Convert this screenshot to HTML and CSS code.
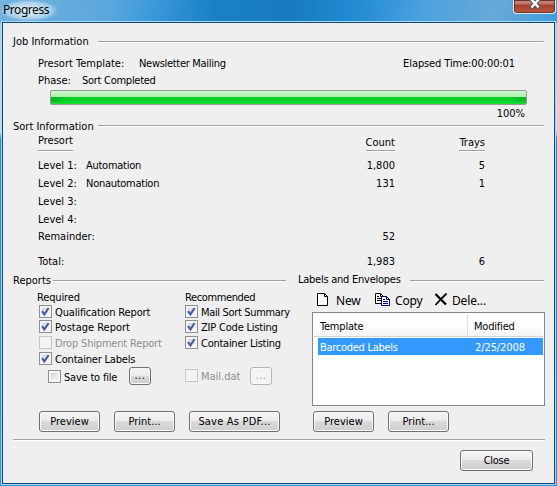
FILE: index.html
```html
<!DOCTYPE html>
<html lang="en">
<head>
<meta charset="utf-8">
<title>Progress</title>
<link rel="stylesheet" href="styles.css">
</head>
<body>
<svg width="0" height="0" class="defs"><defs>
  <symbol id="tick" viewBox="0 0 13 13"><path d="M3 6.2 5.4 9.4 9.6 3" fill="none" stroke="#415fa3" stroke-width="2.1"/></symbol>
</defs></svg>
<div class="window">
  <header class="titlebar">
    <h1>Progress</h1>
    <div class="x"><svg width="12" height="10" viewBox="0 0 12 10"><path d="M2-1 10 8M10-1 2 8" stroke="#555" stroke-width="4.6"/><path d="M2-1 9.6 7.5M10-1 2.4 7.5" stroke="#fff" stroke-width="2.4"/></svg></div>
  </header>
  <main class="client">
    <section class="job">
      <div class="legend"><h2 class="l-job">Job Information</h2><i></i></div>
      <div class="info"><span class="t-a">Presort Template:</span><span class="t-b">Newsletter Mailing</span><span class="elapsed">Elapsed Time:00:00:01</span></div>
      <div class="info phase"><span class="t-c">Phase:</span><span class="t-d">Sort Completed</span></div>
      <div class="bar"></div>
      <div class="pct">100%</div>
    </section>
    <section class="sort">
      <div class="legend"><h2 class="l-sort">Sort Information</h2><i></i></div>
      <div class="row head"><span><u>Presort</u></span><span></span><span class="n"><u>Count</u></span><span class="n"><u>Trays</u></span></div>
      <div class="row"><span>Level 1:</span><span class="auto">Automation</span><span class="n">1,800</span><span class="n">5</span></div>
      <div class="row"><span>Level 2:</span><span class="auto">Nonautomation</span><span class="n">131</span><span class="n">1</span></div>
      <div class="row"><span>Level 3:</span></div>
      <div class="row l4"><span>Level 4:</span></div>
      <div class="row rem"><span>Remainder:</span><span></span><span class="n">52</span></div>
      <div class="row"><span>Total:</span><span></span><span class="n">1,983</span><span class="n">6</span></div>
    </section>
    <div class="lower">
      <section class="reports">
        <div class="legend"><h2 class="l-rep">Reports</h2><i></i></div>
        <div class="cols">
          <div class="col">
            <h3 class="req">Required</h3>
            <label><b class="box"><svg><use href="#tick"/></svg></b><span class="q">Qualification Report</span></label>
            <label><b class="box"><svg><use href="#tick"/></svg></b><span class="p">Postage Report</span></label>
            <label class="off"><b class="box"></b><span class="d">Drop Shipment Report</span></label>
            <label><b class="box"><svg><use href="#tick"/></svg></b><span class="c">Container Labels</span></label>
            <div class="file"><label><b class="box"></b><span class="s">Save to file</span></label><button class="dots">...</button></div>
          </div>
          <div class="col second">
            <h3 class="rec">Recommended</h3>
            <label><b class="box"><svg><use href="#tick"/></svg></b><span class="m">Mail Sort Summary</span></label>
            <label><b class="box"><svg><use href="#tick"/></svg></b><span class="z">ZIP Code Listing</span></label>
            <label><b class="box"><svg><use href="#tick"/></svg></b><span class="cl">Container Listing</span></label>
            <div class="file mail"><label class="off"><b class="box"></b><span class="md">Mail.dat</span></label><button class="dots off">...</button></div>
          </div>
        </div>
        <div class="buttons"><button>Preview</button><button>Print...</button><button class="wide">Save As PDF...</button></div>
      </section>
      <section class="labels">
        <div class="legend"><h2 class="l-lab">Labels and Envelopes</h2><i></i></div>
        <div class="tools">
          <span class="tool new"><svg width="12" height="13" viewBox="0 0 12 13"><path d="M.5.5H7.5L10.5 3.5V12.5H.5Z" fill="#fff" stroke="#000"/><path d="M7.5.5V3.5H10.5" fill="none" stroke="#000"/></svg>New</span>
          <span class="tool copy"><svg width="16" height="14" viewBox="0 0 16 14"><path d="M.5.5H5.5L8.5 3.5V10.5H.5Z" fill="#fff" stroke="#000"/><path d="M5.5.5V3.5H8.5M2 3.5H4M2 5.5H6M2 7.5H6" fill="none" stroke="#000"/><path d="M6.5 3.5H11.5L14.5 6.5V12.5H6.5Z" fill="#fff" stroke="#000080"/><path d="M11.5 3.5V6.5H14.5M8 6.5H10M8 8.5H13M8 10.5H13" fill="none" stroke="#000080"/></svg>Copy</span>
          <span class="tool del"><svg width="14" height="13" viewBox="0 0 14 13"><path d="M1.5 1 12 11.5" stroke="#000" stroke-width="2.2"/><path d="M12.5.5 7 6 1.5 12" fill="none" stroke="#000" stroke-width="1.8"/></svg>Dele...</span>
        </div>
        <div class="list">
          <div class="lrow lhead"><span class="tp">Template</span><span class="mo">Modified</span></div>
          <div class="lrow sel"><span class="bl">Barcoded Labels</span><span class="dt">2/25/2008</span></div>
        </div>
        <div class="buttons"><button>Preview</button><button>Print...</button></div>
      </section>
    </div>
    <footer><button class="close">Close</button></footer>
  </main>
</div>
</body>
</html>
```
FILE: styles.css
```css
* { box-sizing: border-box; }
body { margin: 0; font: 11px/16px "DejaVu Sans Condensed", "DejaVu Sans", sans-serif; font-stretch: condensed; color: #000; }
h1, h2, h3 { margin: 0; font: inherit; }
.defs { display: block; }
.window { width: 557px; height: 486px; overflow: hidden; padding: 0 2px 2px;
  background: linear-gradient(100deg, #72b2de 0, #5aa7dd 110px, #3a98da 155px, #1b80c6 210px, #187bc0 290px, #218ad3 350px, #4da2dd 420px, #67a9d7 490px, #3c9cdc 557px) 0 0 / 100% 23px no-repeat,
  linear-gradient(#a5cce6 0, #c3e0f1 132px, #2689d4 139px, #2a91dc 100%); }
.titlebar { height: 22px; display: flex; justify-content: space-between; align-items: flex-start; }
h1 { font: 12px/20px "Noto Sans", sans-serif; letter-spacing: -.45px; margin-left: -2px; padding: 0 9px 1px 3px; background: radial-gradient(ellipse, rgba(255,255,255,.75) 15%, rgba(255,255,255,.4) 55%, transparent 72%); }
.x { width: 43px; height: 14px; margin-right: -1px; border: 1px solid #d8ecf7; border-top: 0; border-radius: 0 0 4px 4px; background: linear-gradient(#c98d84 0, #bd7468 4px, #a8402d 5px, #b95740 100%); box-shadow: inset 0 0 0 1px #73302a; display: flex; justify-content: center; }
.client { height: 462px; background: #efefef; border: 1px solid #12476c; box-shadow: 0 0 0 1px #a8dbf5; padding: 11px 10px 0; white-space: nowrap; }
.legend { display: flex; height: 14px; }
.legend h2 { flex: none; }
.legend i { flex: 1; height: 2px; margin-top: 7px; background: #a0a0a0; border-bottom: 1px solid #fff; }
.job { height: 85px; }
.l-job, .l-sort { width: 85px; }
.info { display: flex; height: 14px; margin: 8px 0 0 25px; }
.phase { margin-top: 3px; }
.t-a { width: 101px; }
.t-b { letter-spacing: -.3px; }
.t-c { width: 44px; }
.t-d, .auto { letter-spacing: -.27px; }
.elapsed { margin-left: auto; margin-right: 29px; letter-spacing: -.1px; }
.bar { margin: 3px 17px 0 37px; height: 15px; border: 1px solid #969b96; border-radius: 2px;
  background: linear-gradient(90deg, rgba(0,130,20,.35), transparent 16px calc(100% - 16px), rgba(0,130,20,.35)) 0 6px / 100% 5px no-repeat, linear-gradient(#d0f9d0 0, #a9efab 6px, #0acc26 6px, #09d329 10px, #1edc36 100%); }
.pct { text-align: right; height: 14px; margin: 1px 19px 0 0; }
.sort { height: 154px; }
.sort .legend i { margin-top: 6px; }
.row { display: grid; grid-template-columns: 48px 180px 129px 90px; margin: 0 0 4px 25px; height: 14px; }
.row .n { text-align: right; }
.row.head { margin: 1px 0 10px 25px; }
.head u { display: block; width: fit-content; text-decoration: none; line-height: 14px; height: 17px; border-bottom: 1px solid #a0a0a0; box-shadow: 0 1px #fff; }
.head .n u { margin-left: auto; line-height: 17px; }
.l4 { margin-bottom: 3px; }
.rem { margin-bottom: 11px; }
.lower { display: flex; height: 167px; border-bottom: 1px solid #a0a0a0; box-shadow: 0 1px #fff; margin-right: -1px; }
.reports { flex: none; width: 273px; margin-right: 12px; }
.labels { flex: 1; }
.labels .legend { margin-right: 1px; }
.l-rep { width: 40px; }
.l-lab { width: 112px; margin-top: -1px; letter-spacing: -.25px; }
.cols { display: flex; height: 124px; padding: 3px 0 0 26px; }
.col { flex: none; width: 146px; }
.second { width: 101px; }
.col label { display: flex; height: 14px; margin-bottom: 2px; gap: 3px; }
.col h3 { height: 15px; margin-left: -2px; }
.second h3 { margin-left: 0; letter-spacing: -.38px; }
.req { letter-spacing: -.15px; }
.q { letter-spacing: -.15px; }
.d { letter-spacing: -.18px; }
.c, .s, .z { letter-spacing: -.2px; }
.m { letter-spacing: -.34px; }
.cl { letter-spacing: -.26px; }
.col label:first-of-type { margin-bottom: 1px; }
.box { flex: none; width: 13px; height: 13px; border: 1px solid #8e8f8f; background: linear-gradient(135deg, #cfd3d9, #f7f7f7) 2px 2px / 7px 7px no-repeat #f4f4f4; display: block; }
.box svg { width: 13px; height: 13px; display: block; margin: -1px; }
.off { color: #8e908c; }
.off .box { border-color: #c4c4c4; background: #f4f4f4; }
.file { display: flex; padding-left: 9px; align-items: flex-start; }
.file label { width: 81px; margin-top: 2px; }
.mail { padding-left: 0; margin-top: 19px; }
.mail label { width: 65px; margin-top: 0; }
button { font: inherit; color: #000; width: 61px; height: 21px; padding: 1px 0 0; line-height: 18px; border: 1px solid #707070; border-radius: 3px; background: linear-gradient(#f5f5f5, #ebebeb 48%, #dadada 50%, #cecece); box-shadow: inset 0 0 0 1px #fafafa; }
.dots { flex: none; width: 22px; height: 18px; margin-top: -1px; padding: 0 0 1px; letter-spacing: .6px; line-height: 12px; }
.dots.off { margin-top: -2px; color: #9a9a9a; border-color: #b4b4b4; background: #f3f3f3; }
.buttons { display: flex; gap: 14px; }
.reports .buttons { padding: 0 0 0 26px; }
.labels .buttons { padding: 5px 0 0 15px; }
.wide { width: 91px; letter-spacing: .2px; }
.tools { display: flex; height: 25px; padding: 5px 0 0 19px; font: 12px/17px "Noto Sans", sans-serif; letter-spacing: -.15px; }
.tool { display: flex; }
.tool svg { margin-top: 1px; margin-right: 7px; }
.new { width: 58px; }
.copy { width: 59px; }
.copy svg { margin-right: 4px; }
.del svg { margin-right: 4px; }
.list { margin-left: 14px; width: 233px; height: 94px; background: #fff; border: 1px solid #828790; padding: 1px; }
.lrow { display: grid; grid-template-columns: 154px 1fr; letter-spacing: -.2px; }
.lhead { height: 23px; border-bottom: 1px solid #d5d5d5; background: linear-gradient(#fff 45%, #f5f5f7); line-height: 25px; }
.lhead span { padding-left: 6px; height: 22px; }
.lhead .mo { border-left: 1px solid #dedfe1; margin-left: -1px; }
.sel { height: 17px; margin: 1px 0 0 4px; grid-template-columns: 150px 1fr; color: #fff; background: #3399ff; line-height: 19px; }
.sel span { padding-left: 2px; }
.bl { letter-spacing: -.28px; }
.sel .dt { padding-left: 7px; letter-spacing: -.1px; }
footer { display: flex; justify-content: flex-end; padding: 10px 11px 0 0; }
.close { width: 73px; letter-spacing: -.25px; }
```
